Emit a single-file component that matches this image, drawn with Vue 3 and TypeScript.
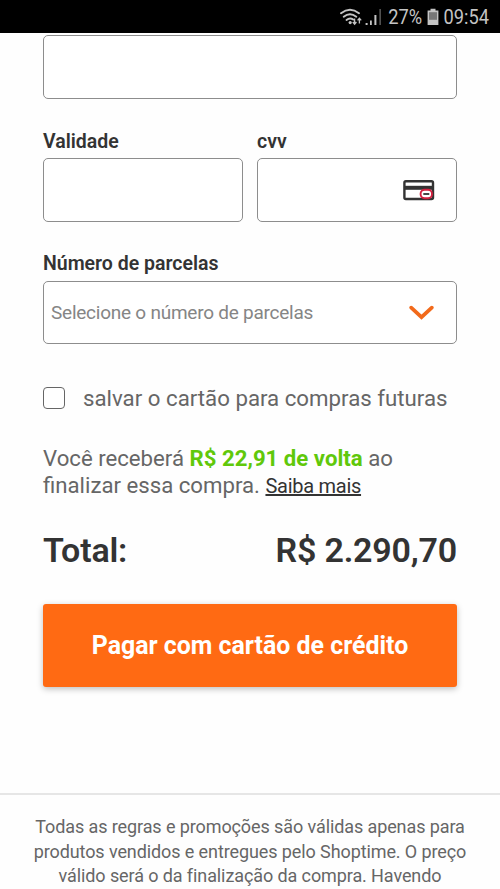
<script setup lang="ts">
import { ref } from 'vue'

const cardNumber = ref('')
const expiry = ref('')
const cvv = ref('')
const saveCard = ref(false)
const terms: string[] = [
  'Todas as regras e promoções são válidas apenas para',
  'produtos vendidos e entregues pelo Shoptime. O preço',
  'válido será o da finalização da compra. Havendo',
]
</script>

<template>
  <div class="screen">
    <header class="status">
      <svg class="wifi" viewBox="0 0 24 18" width="24" height="18">
        <g fill="none" stroke="#c4c4c4" stroke-width="1.9" stroke-linecap="round">
          <path d="M1 5.2Q10-1.8 19 5.2" />
          <path d="M3.7 8.7Q10 3.6 16.3 8.7" />
          <path d="M6.5 12Q10 9.2 13.2 11.6" />
        </g>
        <circle cx="10.2" cy="14.6" r="1.6" fill="#c4c4c4" />
        <path d="M14.6 10.6v5M12.8 14l1.8 2.2 1.8-2.2M19.4 15.6v-5M17.6 12.4l1.8-2.2 1.8 2.2" fill="none" stroke="#c4c4c4" stroke-width="1.3" />
      </svg>
      <svg class="signal" viewBox="0 0 18 18" width="18" height="18">
        <path d="M.6 15h2v2h-2zM5 12.4h1.8V17H5zM9.4 7h2v10h-2z" fill="#c4c4c4" />
        <path d="M14.4 1h1.5v16h-1.5z" fill="#5a5a5a" />
      </svg>
      <span class="percent">27%</span>
      <svg class="battery" viewBox="0 0 12 18" width="12" height="18">
        <path d="M3.5 .8h5v1.8h2.9V17H.6V2.6h2.9z" fill="#c4c4c4" />
        <path d="M2 4.2h8v7.6H2z" fill="#777" />
      </svg>
      <span class="clock">09:54</span>
    </header>

    <main class="form">
      <input v-model="cardNumber" class="box" type="text" aria-label="cartão" />
      <div class="pair">
        <label class="field">
          <span class="label">Validade</span>
          <input v-model="expiry" class="box" type="text" />
        </label>
        <label class="field">
          <span class="label">cvv</span>
          <span class="box cvv-box">
            <input v-model="cvv" class="bare" type="text" />
            <svg viewBox="0 0 32 22" width="32" height="22">
              <rect x="1.4" y="2.2" width="28.6" height="17.8" rx="1.5" fill="#fff" stroke="#333" stroke-width="2.4" />
              <path d="M1 6.8h29.6v4H1z" fill="#333" />
              <rect x="17.6" y="10.8" width="11.4" height="8.4" rx="4" fill="#fff" stroke="#d3203f" stroke-width="1.9" />
              <path d="M20.3 15h6" stroke="#333" stroke-width="1.8" />
            </svg>
          </span>
        </label>
      </div>

      <div class="field parcelas">
        <span class="label">Número de parcelas</span>
        <div class="box select">
          <span class="placeholder">Selecione o número de parcelas</span>
          <svg viewBox="0 0 26 16" width="26" height="16">
            <path d="M2.2 2.6 12.5 12.2 22.8 2.6" fill="none" stroke="#f26a1b" stroke-width="3.7" stroke-linecap="round" />
          </svg>
        </div>
      </div>

      <label class="save">
        <input v-model="saveCard" class="check" type="checkbox" />
        <span>salvar o cartão para compras futuras</span>
      </label>

      <p class="cashback">
        <span>Você receberá <strong>R$ 22,91 de volta</strong> ao</span><br />
        <span>finalizar essa compra. </span><a class="more">Saiba mais</a>
      </p>

      <div class="total"><span>Total:</span><span>R$ 2.290,70</span></div>
      <button class="pay" type="button"><span>Pagar com cartão de crédito</span></button>
    </main>

    <footer class="terms">
      <div v-for="line in terms" :key="line">{{ line }}</div>
    </footer>
  </div>
</template>

<style>
body { background: #fff; }
</style>

<style scoped>
.screen {
  height: 889px;
  overflow: hidden;
  background: #fefefe;
  color: #666;
  font-family: Roboto, "Liberation Sans", sans-serif;
}
.status {
  box-sizing: border-box;
  height: 33px;
  padding: 1px 11px 0 0;
  display: flex;
  justify-content: flex-end;
  align-items: center;
  background: #000;
  color: #c4c4c4;
  font-size: 20.5px;
}
.percent, .clock { transform: scaleX(.89); transform-origin: 100% 50%; }
.wifi { margin-right: 1px; }
.signal { margin-right: 1px; }
.battery { margin: 0 -1px 0 5px; }
.form { padding: 2px 43px 0; }
.box {
  display: block;
  box-sizing: border-box;
  width: 100%;
  height: 64px;
  margin: 0;
  border: 1px solid #8d8d8d;
  border-radius: 5px;
  background: #fff;
  outline: none;
}
.pair { display: grid; grid-template-columns: 200px 200px; gap: 14px; margin-top: 30px; }
.field { display: block; }
.label {
  display: block;
  height: 29px;
  line-height: 25px;
  font-size: 19.5px;
  font-weight: 600;
  color: #333;
}
.cvv-box { display: flex; align-items: center; padding-right: 21px; }
.bare { flex: 1; min-width: 0; border: 0; outline: none; background: transparent; }
.parcelas { margin-top: 30px; }
.parcelas .label { line-height: 24px; }
.select {
  height: 63px;
  display: flex;
  align-items: center;
  justify-content: space-between;
  padding: 0 21px 0 7px;
}
.placeholder { font-size: 19px; letter-spacing: -.24px; color: #858585; }
.save { display: flex; align-items: center; height: 30px; margin-top: 39px; font-size: 22.25px; }
.check {
  appearance: none;
  box-sizing: border-box;
  width: 22px;
  height: 22px;
  margin: 0 18px 0 0;
  border: 1px solid #666;
  border-radius: 4px;
  background: #fff;
}
.cashback { margin: 32px 0 0; font-size: 22.2px; line-height: 26.5px; white-space: nowrap; }
.cashback strong { color: #60c80a; }
.more { color: #333; font-size: 20px; letter-spacing: -.27px; text-decoration: underline; }
.total {
  display: flex;
  justify-content: space-between;
  margin-top: 30px;
  height: 42px;
  line-height: 42px;
  font-size: 34px;
  letter-spacing: -.2px;
  font-weight: 600;
  color: #333;
}
.pay {
  display: block;
  width: 100%;
  height: 83px;
  margin-top: 33px;
  padding: 0;
  border: 0;
  border-radius: 3px;
  background: #ff6a13;
  box-shadow: 0 2px 6px rgba(0, 0, 0, .25);
  color: #fff;
  font: 700 24.9px Roboto, "Liberation Sans", sans-serif;
}
.terms {
  margin-top: 106px;
  padding-top: 20px;
  border-top: 2px solid #e6e6e6;
  text-align: center;
  font-size: 18px;
  letter-spacing: -.1px;
  line-height: 24.5px;
  white-space: nowrap;
}
</style>
